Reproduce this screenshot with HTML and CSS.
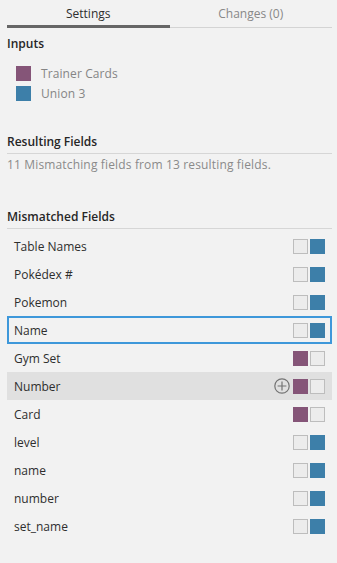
FILE: index.html
```html
<!DOCTYPE html>
<html>
<head>
<meta charset="utf-8">
<link rel="stylesheet" href="styles.css">
</head>
<body>
<div class="panel">
  <div class="tabs">
    <div class="tab active">Settings</div>
    <div class="tab">Changes (0)</div>
  </div>

  <div class="title inputs-title">Inputs</div>
  <div class="inputs">
    <div class="input"><span class="swatch purple"></span><span>Trainer Cards</span></div>
    <div class="input"><span class="swatch blue"></span><span>Union 3</span></div>
  </div>

  <div class="title ruled result-title">Resulting Fields</div>
  <div class="desc">11 Mismatching fields from 13 resulting fields.</div>

  <div class="title ruled mismatch-title">Mismatched Fields</div>
  <div class="rows">
    <div class="row"><span class="label">Table Names</span><span class="boxes"><span class="box"></span><span class="box blue"></span></span></div>
    <div class="row"><span class="label">Pokédex #</span><span class="boxes"><span class="box"></span><span class="box blue"></span></span></div>
    <div class="row"><span class="label">Pokemon</span><span class="boxes"><span class="box"></span><span class="box blue"></span></span></div>
    <div class="row selected"><span class="label">Name</span><span class="boxes"><span class="box"></span><span class="box blue"></span></span></div>
    <div class="row"><span class="label">Gym Set</span><span class="boxes"><span class="box purple"></span><span class="box"></span></span></div>
    <div class="row hover"><span class="label">Number</span><span class="boxes">
      <svg class="plus" width="16" height="16" viewBox="0 0 16 16"><circle cx="8" cy="8" r="7.2" fill="none" stroke="#737373" stroke-width="1.2"/><path d="M8 3.6V12.4M3.6 8H12.4" stroke="#737373" stroke-width="1.2"/></svg>
      <span class="box purple"></span><span class="box"></span></span></div>
    <div class="row"><span class="label">Card</span><span class="boxes"><span class="box purple"></span><span class="box"></span></span></div>
    <div class="row"><span class="label">level</span><span class="boxes"><span class="box"></span><span class="box blue"></span></span></div>
    <div class="row"><span class="label">name</span><span class="boxes"><span class="box"></span><span class="box blue"></span></span></div>
    <div class="row"><span class="label">number</span><span class="boxes"><span class="box"></span><span class="box blue"></span></span></div>
    <div class="row"><span class="label">set_name</span><span class="boxes"><span class="box"></span><span class="box blue"></span></span></div>
  </div>
</div>
</body>
</html>
```

FILE: styles.css
```css
html, body {
  margin: 0;
  padding: 0;
  background: #f2f2f2;
}
body {
  font-family: "Open Sans", "Noto Sans", sans-serif;
  font-size: 12px;
  color: #2e2e2e;
  height: 563px;
  overflow: hidden;
}
.panel {
  padding: 0 5px 0 7px;
}
.tabs {
  display: flex;
  align-items: stretch;
}
.tab {
  flex: 1;
  box-sizing: border-box;
  height: 28px;
  padding-top: 6px;
  line-height: 16px;
  text-align: center;
  color: #888;
  border-bottom: 1px solid #d4d4d4;
}
.tab.active {
  color: #2e2e2e;
  border-bottom: 3px solid #666;
}
.title {
  font-weight: 600;
  color: #262626;
  line-height: 16px;
}
.inputs-title {
  margin-top: 8px;
}
.inputs {
  margin-top: 11px;
}
.input {
  display: flex;
  align-items: center;
  height: 20px;
  color: #858585;
  letter-spacing: 0.1px;
}
.swatch {
  width: 15px;
  height: 15px;
  margin-left: 9px;
  margin-right: 10px;
}
.purple { background: #855578; }
.blue { background: #3d7fa9; }
.ruled {
  padding-bottom: 3px;
  border-bottom: 1px solid #d6d6d6;
}
.result-title {
  margin-top: 31px;
}
.desc {
  margin-top: 3px;
  line-height: 16px;
  color: #8a8a8a;
  letter-spacing: 0.15px;
}
.mismatch-title {
  margin-top: 36px;
}
.rows {
  margin-top: 3px;
}
.row {
  display: flex;
  align-items: center;
  justify-content: space-between;
  height: 28px;
  padding: 0 7px;
}
.row.hover {
  background: #e0e0e0;
}
.row.selected {
  box-shadow: inset 0 0 0 2px #3e98da;
}
.boxes {
  display: flex;
  align-items: center;
  gap: 2px;
}
.plus {
  margin-right: 1px;
}
.box {
  width: 15px;
  height: 15px;
  box-sizing: border-box;
  background: #ececec;
  border: 1px solid #bdbdbd;
}
.box.blue {
  background: #3d7fa9;
  border: none;
}
.box.purple {
  background: #855578;
  border: none;
}
```
